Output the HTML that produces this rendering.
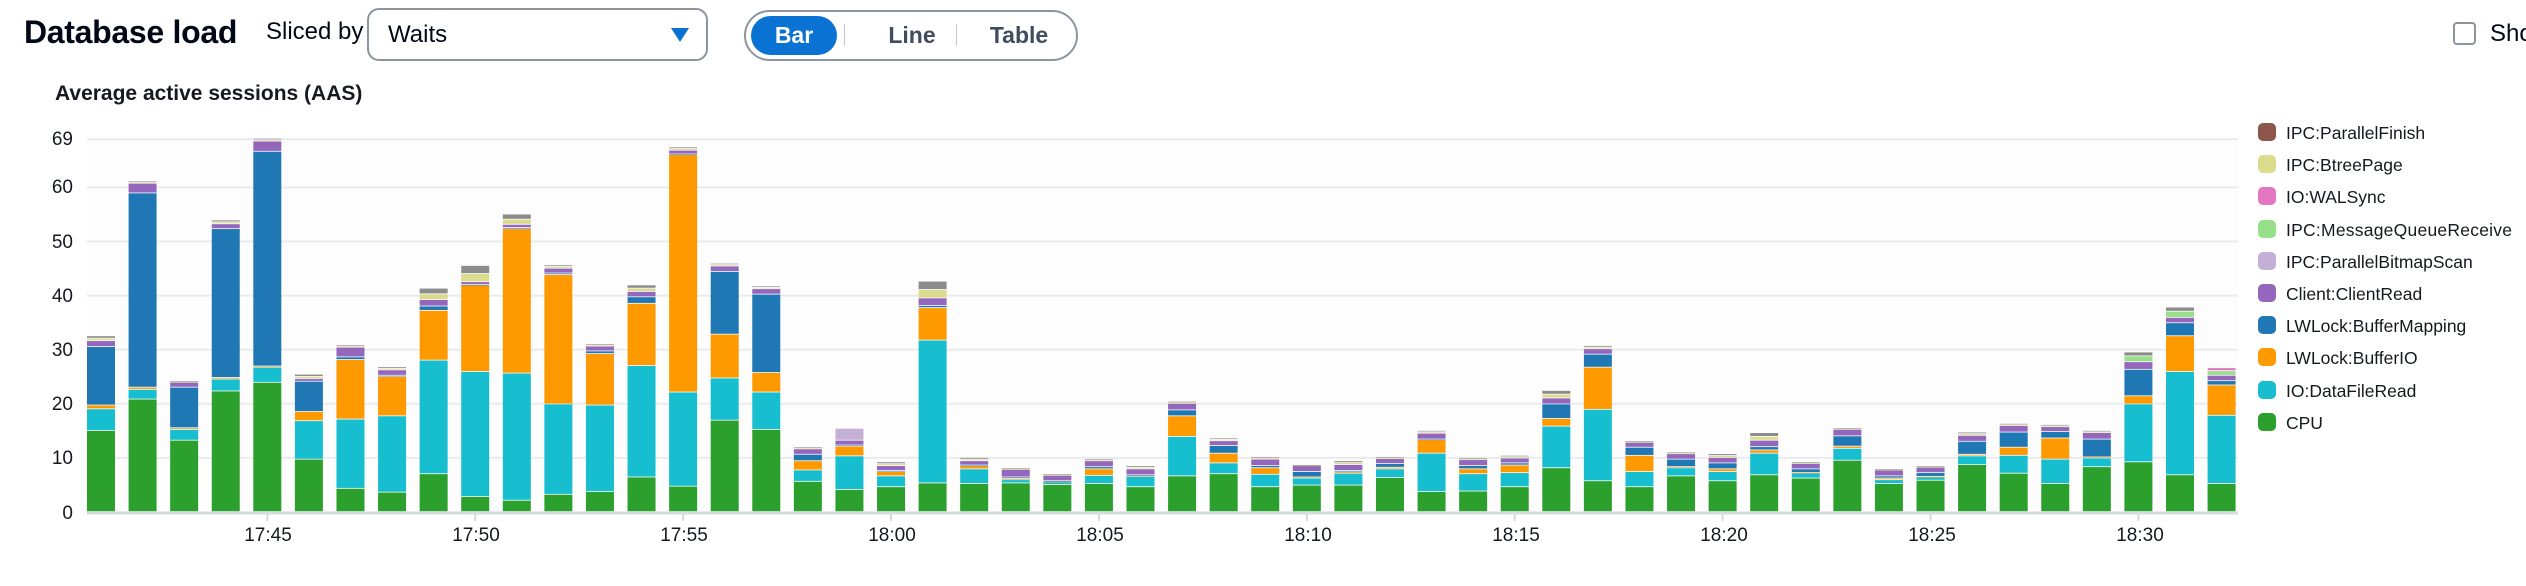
<!DOCTYPE html>
<html><head><meta charset="utf-8"><style>
html,body{margin:0;padding:0;background:#fff;width:2526px;height:586px;overflow:hidden;font-family:"Liberation Sans",Arial,sans-serif;color:#000716}
.abs{position:absolute}
</style></head><body>
<div class="abs" style="left:24px;top:14px;font-size:32px;font-weight:bold;letter-spacing:-0.3px">Database load</div>
<div class="abs" style="left:266px;top:18px;font-size:24px">Sliced by</div>
<div class="abs" style="left:367px;top:8px;width:341px;height:53px;border:2px solid #8c959f;border-radius:12px;box-sizing:border-box"></div>
<div class="abs" style="left:388px;top:21px;font-size:24px">Waits</div>
<svg class="abs" style="left:670px;top:27px" width="20" height="16"><polygon points="1,1 19,1 10,15" fill="#0972d3"/></svg>
<div class="abs" style="left:744px;top:10px;width:334px;height:51px;border:2px solid #8c959f;border-radius:26px;box-sizing:border-box"></div>
<div class="abs" style="left:751px;top:16px;width:86px;height:39px;background:#0972d3;border-radius:20px;color:#fff;font-weight:bold;font-size:23px;text-align:center;line-height:39px">Bar</div>
<div class="abs" style="left:844px;top:24px;width:1px;height:22px;background:#c6c6cd"></div>
<div class="abs" style="left:956px;top:24px;width:1px;height:22px;background:#c6c6cd"></div>
<div class="abs" style="left:872px;top:16px;width:80px;font-weight:bold;font-size:23px;line-height:39px;text-align:center;color:#414d5c">Line</div>
<div class="abs" style="left:975px;top:16px;width:88px;font-weight:bold;font-size:23px;line-height:39px;text-align:center;color:#414d5c">Table</div>
<div class="abs" style="left:2453px;top:22px;width:23px;height:23px;border:2px solid #8c959f;border-radius:4px;box-sizing:border-box"></div>
<div class="abs" style="left:2490px;top:20px;font-size:24px">Sho</div>
<div class="abs" style="left:55px;top:82px;font-size:21px;font-weight:bold;color:#16191f">Average active sessions (AAS)</div>
<svg id="ch" class="abs" style="left:0;top:0" width="2526" height="586">
<rect x="87" y="139" width="2151" height="373" fill="#fdfdfd"/>
<g stroke="#e9ebed" stroke-width="2">
<line x1="87" x2="2238" y1="139.2" y2="139.2"/><line x1="87" x2="2238" y1="187.4" y2="187.4"/><line x1="87" x2="2238" y1="241.5" y2="241.5"/><line x1="87" x2="2238" y1="295.6" y2="295.6"/><line x1="87" x2="2238" y1="349.7" y2="349.7"/><line x1="87" x2="2238" y1="403.8" y2="403.8"/><line x1="87" x2="2238" y1="457.9" y2="457.9"/>
</g>
<g font-size="19" fill="#16191f" text-anchor="end" font-family="Liberation Sans,sans-serif">
<text x="73" y="145">69</text><text x="73" y="193">60</text><text x="73" y="248">50</text><text x="73" y="302">40</text><text x="73" y="356">30</text><text x="73" y="410">20</text><text x="73" y="464">10</text><text x="73" y="519">0</text>
</g>
<g id="bars"></g>
<line x1="87" x2="2238" y1="513" y2="513" stroke="#d5dbdb" stroke-width="3"/>
<g stroke="#d5dbdb" stroke-width="2" id="ticks"></g>
<g font-size="19" fill="#16191f" text-anchor="middle" font-family="Liberation Sans,sans-serif">
<text x="268" y="541">17:45</text><text x="476" y="541">17:50</text><text x="684" y="541">17:55</text><text x="892" y="541">18:00</text><text x="1100" y="541">18:05</text><text x="1308" y="541">18:10</text><text x="1516" y="541">18:15</text><text x="1724" y="541">18:20</text><text x="1932" y="541">18:25</text><text x="2140" y="541">18:30</text>
</g>
<g font-size="17.5" fill="#16191f" font-family="Liberation Sans,sans-serif">
<rect x="2258" y="123" width="18" height="18" rx="5" fill="#8c564b"/><text x="2286" y="139">IPC:ParallelFinish</text>
<rect x="2258" y="155" width="18" height="18" rx="5" fill="#dbdb8d"/><text x="2286" y="171">IPC:BtreePage</text>
<rect x="2258" y="187" width="18" height="18" rx="5" fill="#e377c2"/><text x="2286" y="203">IO:WALSync</text>
<rect x="2258" y="220" width="18" height="18" rx="5" fill="#98df8a"/><text x="2286" y="236" textLength="226">IPC:MessageQueueReceive</text>
<rect x="2258" y="252" width="18" height="18" rx="5" fill="#c5b0d5"/><text x="2286" y="268">IPC:ParallelBitmapScan</text>
<rect x="2258" y="284" width="18" height="18" rx="5" fill="#9467bd"/><text x="2286" y="300">Client:ClientRead</text>
<rect x="2258" y="316" width="18" height="18" rx="5" fill="#1f77b4"/><text x="2286" y="332">LWLock:BufferMapping</text>
<rect x="2258" y="348" width="18" height="18" rx="5" fill="#ff9900"/><text x="2286" y="364">LWLock:BufferIO</text>
<rect x="2258" y="381" width="18" height="18" rx="5" fill="#17becf"/><text x="2286" y="397">IO:DataFileRead</text>
<rect x="2258" y="413" width="18" height="18" rx="5" fill="#2ca02c"/><text x="2286" y="429">CPU</text>
</g>
</svg>
<script>
var D=[[15,19,19.7,30.5,31.6,32.5],[20.8,22.6,23,58.9,60.7,61.1],[13.2,15.2,15.5,23,23.9,24.2],[22.3,24.5,24.8,52.3,53.2,53.9],[23.9,26.7,26.9,66.6,68.5,69],[9.7,16.8,18.5,24.1,24.6,25.4],[4.3,17.1,28.1,28.6,30.4,30.8],[3.6,17.7,25,25.2,26.2,26.8],[7,28,37.2,38,39.2,41.3],[2.8,25.9,41.9,42,42.5,45.5],[2.1,25.6,52.3,52.5,53.1,55],[3.2,19.9,43.8,44.1,45,45.6],[3.7,19.7,29.2,29.7,30.6,31],[6.4,27,38.5,39.7,40.7,41.9],[4.7,22.1,66,66.1,66.8,67.4],[16.9,24.7,32.8,44.4,45.4,45.9],[15.2,22.1,25.7,40.2,41.2,41.7],[5.6,7.7,9.4,10.6,11.6,12],[4.1,10.3,12.1,12.3,13.2,15.4],[4.6,6.6,7.4,7.6,8.5,9.2],[5.3,31.7,37.7,38.1,39.5,42.6],[5.2,7.9,8.5,8.6,9.4,10],[5.3,5.9,6.1,6.4,7.8,8.1],[5,5.5,5.6,5.7,6.7,7],[5.2,6.7,7.9,8.3,9.4,9.8],[4.6,6.5,6.7,6.8,7.9,8.5],[6.6,13.9,17.7,18.8,20,20.4],[7,9,10.8,12.2,13.1,13.6],[4.6,6.9,8.1,8.5,9.7,10.1],[4.9,6.2,6.4,7.4,8.5,8.7],[4.9,7.1,7.4,7.6,8.7,9.4],[6.3,7.9,8.2,8.9,9.8,10.1],[3.7,10.8,13.3,13.4,14.5,15],[3.8,7,7.9,8.5,9.6,9.9],[4.6,7.2,8.6,9,9.9,10.4],[8.1,15.8,17.2,19.9,21,22.4],[5.7,18.9,26.7,29.1,30.1,30.7],[4.6,7.4,10.4,11.9,12.8,13.1],[6.6,8.1,8.3,9.7,10.7,11],[5.7,7.4,7.9,9,10,10.7],[6.8,10.8,11.4,12,13.2,14.6],[6.2,7.1,7.2,7.9,8.9,9.2],[9.5,11.7,12.1,14,15.2,15.5],[5.2,5.9,6.2,6.6,7.7,7.9],[5.8,6.4,6.5,7.2,8.2,8.5],[8.7,10.3,10.6,13,14.1,14.7],[7.1,10.4,11.9,14.7,15.9,16.3],[5.2,9.7,13.6,14.8,15.7,16.1],[8.3,9.9,10.1,13.4,14.6,15],[9.2,19.9,21.4,26.3,27.7,29.5],[6.8,25.9,32.5,34.9,35.9,37.8],[5.2,17.8,23.4,24.2,25.2,26.6]];
var C=["#2ca02c","#17becf","#ff9900","#1f77b4","#9467bd"];
var ns="http://www.w3.org/2000/svg",g=document.getElementById("bars"),tk=document.getElementById("ticks");
function Y(v){return 512-v*5.41}
function R(x,a,b,c){var h=Y(a)-Y(b)-0.8;if(h<0.6)h=0.6;var r=document.createElementNS(ns,"rect");r.setAttribute("x",x);r.setAttribute("y",Y(b));r.setAttribute("width",28);r.setAttribute("height",h);r.setAttribute("fill",c);g.appendChild(r);}
D.forEach(function(d,i){var x=87+i*41.58,p=0;for(var k=0;k<5;k++){R(x,p,d[k],C[k]);p=d[k];}
var m=d[5]-d[4];if(i==18){R(x,d[4],d[5],"#c5b0d5");}else if(i>=49){R(x,d[4],d[4]+m*0.6,"#98df8a");R(x,d[4]+m*0.6,d[5],i==51?"#e377c2":"#8c8c8c");}else{R(x,d[4],d[4]+m*0.5,"#dbdb8d");R(x,d[4]+m*0.5,d[5],"#8c8c8c");}
if(i%5==4){var l=document.createElementNS(ns,"line");l.setAttribute("x1",x+14);l.setAttribute("x2",x+14);l.setAttribute("y1",514);l.setAttribute("y2",521);tk.appendChild(l);}});
</script>
</body></html>
